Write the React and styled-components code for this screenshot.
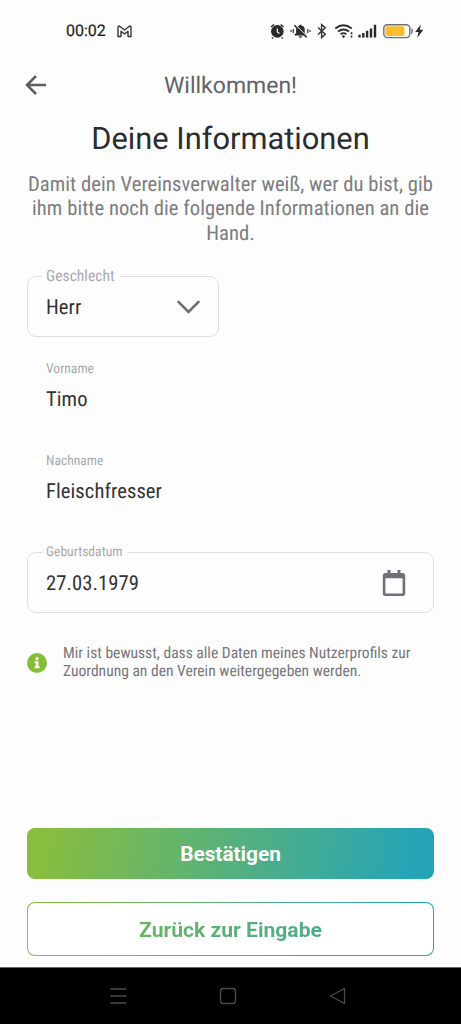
import React from "react";
import styled, { createGlobalStyle } from "styled-components";

const Global = createGlobalStyle`
  * { box-sizing: border-box; }
  body { margin: 0; background: #fdfdfd; font-family: Roboto, "Liberation Sans", sans-serif; text-rendering: geometricPrecision; }
`;

const Screen = styled.div`
  width: 461px;
  height: 1024px;
  display: flex;
  flex-direction: column;
  background: #fdfdfd;
  overflow: hidden;
`;

const StatusBar = styled.header`
  height: 62px;
  padding: 0 36px 0 66px;
  display: flex;
  align-items: center;
  flex: none;
`;

const Clock = styled.span`
  font: 400 16px/20px Roboto, sans-serif;
  color: #1f1f1f;
  -webkit-text-stroke: 0.2px #1f1f1f;
  width: 51px;
  white-space: nowrap;
`;

const StatusIcons = styled.div`
  margin-left: auto;
  width: 156px;
  height: 20px;
`;

const TitleBar = styled.div`
  height: 46px;
  display: grid;
  grid-template-columns: 48px 1fr 48px;
  align-items: center;
  padding: 0 12px;
  flex: none;
`;

const BackButton = styled.button`
  border: 0;
  background: none;
  padding: 0;
  height: 46px;
  display: grid;
  place-items: center;
`;

const BarTitle = styled.div`
  text-align: center;
  font-size: 23px;
  line-height: 30px;
  padding-top: 2px;
  color: #626267;
`;

const Heading = styled.h1`
  margin: 13px 0 0;
  text-align: center;
  font-size: 30.8px;
  line-height: 36px;
  font-weight: 400;
  color: #2c2c2e;
`;

const Condensed = styled.span`
  display: block;
  width: max-content;
  white-space: nowrap;
  font-family: "Roboto Condensed", Roboto, sans-serif;
  font-stretch: 75%;
  font-size: ${(p) => p.$size}px;
  line-height: ${(p) => p.$line}px;
  letter-spacing: ${(p) => p.$track || 0}px;
  color: ${(p) => p.$color};
`;

const Intro = styled.div`
  margin-top: 16px;
  display: flex;
  flex-direction: column;
  align-items: center;
`;

const Form = styled.div`
  margin: 30px 27px 0;
  display: flex;
  flex-direction: column;
  gap: 31px;
`;

const Field = styled.div`
  position: relative;
  width: ${(p) => p.$width || "100%"};
  height: 61px;
  border: ${(p) => (p.$disabled ? "2px solid #ffffff" : "1px solid #dfdfe2")};
  border-radius: 9px;
  padding: ${(p) => (p.$disabled ? "3px 17px 0" : `3px ${p.$right || 18}px 0 18px`)};
  display: flex;
  align-items: center;
  justify-content: space-between;
`;

const FieldLabel = styled.div`
  position: absolute;
  left: ${(p) => (p.$disabled ? 13 : 14)}px;
  top: -10px;
  padding: 0 5px 0 4px;
  background: #fdfdfd;
`;

const Notice = styled.div`
  margin: 31px 27px 0;
  display: flex;
  align-items: center;
  gap: 16px;
`;

const NoticeText = styled.div`
  padding-bottom: 2px;
`;

const Actions = styled.div`
  margin: auto 27px 11px;
  display: flex;
  flex-direction: column;
  gap: 23px;
`;

const Button = styled.button`
  border: 0;
  padding: 0;
  border-radius: 8px;
  font: 700 ${(p) => p.$size}px/24px Roboto, sans-serif;
  display: grid;
  place-items: center;
`;

const PrimaryButton = styled(Button)`
  height: 51px;
  color: #fff;
  background: linear-gradient(100deg, #88bd40 5%, #58b17a 48%, #25a4b8 95%);
`;

const OutlineButton = styled(Button)`
  height: 54px;
  padding-top: 1px;
  border: 1.5px solid transparent;
  background: linear-gradient(#fff, #fff) padding-box,
    linear-gradient(100deg, #88bd40 5%, #58b17a 48%, #25a4b8 95%) border-box;
`;

const GradientText = styled.span`
  background: linear-gradient(90deg, #69b565, #4bac8b);
  background-clip: text;
  -webkit-background-clip: text;
  color: transparent;
`;

const NavBar = styled.nav`
  height: 57px;
  flex: none;
  background: #000;
  border-top: 1px solid #666;
  padding: 0 110px 0 105px;
  display: flex;
  align-items: center;
  justify-content: space-between;
`;

function MailIcon() {
  return (
    <svg width="15" height="13" viewBox="0 0 16 14" fill="none" stroke="#333" strokeWidth="1.5" strokeLinejoin="round">
      <path d="M1 12.400V2.200Q1 1 2.400 1L8 5.400 13.600 1Q15 1 15 2.200v10.200h-3.200V6.700L8 9.700 4.200 6.700v5.700z" />
    </svg>
  );
}

function SystemIcons() {
  return (
    <svg width="156" height="20" viewBox="269 21 156 20" fill="none">
      <g>
        <circle cx="277.300" cy="31.400" r="6.300" fill="#292929" />
        <path d="M271 27l3-2.500M283.600 27l-3-2.500M273 37.500l-1 1M281.600 37.500l1 1" stroke="#292929" strokeWidth="1.600" />
        <path d="M277.300 28.500v3.500l2.200 1.500" stroke="#fdfdfd" strokeWidth="1.200" />
      </g>
      <g>
        <path d="M294.500 35.500v-1l1.600-1.600V29q.5-3 3.200-3.600Q300.300 23.500 301.500 25.400q3 .6 3.200 3.600v3.900l1.600 1.600v1zM298.600 36.300h3.600q-.4 1.500-1.800 1.500t-1.800-1.500z" fill="#2d2d2d" />
        <path d="M295.300 24.800l12 12" stroke="#fdfdfd" strokeWidth="1.200" />
        <path d="M294.300 25.200l12.300 12.200" stroke="#2d2d2d" strokeWidth="1.500" />
        <path d="M293.300 29v4M291 30v2M307.800 29v4M310 30v2" stroke="#333" strokeWidth="1.200" />
      </g>
      <path d="M318 27.500l7.300 6.800-3.700 3.300V24.600l3.700 3.200-7.300 6.800" stroke="#333" strokeWidth="1.400" />
      <g stroke="#2d2d2d" strokeWidth="1.900">
        <path d="M335.300 28.500q8.200-6.300 16.400 0M338 31.500q5.500-4.200 11 0M340.600 34.200q2.900-2.200 5.800 0" />
        <circle cx="343.500" cy="36.500" r=".9" fill="#2d2d2d" strokeWidth="1" />
        <path d="M351.500 32.300v2M351.500 35.600v2" strokeWidth="1.700" />
      </g>
      <path d="M359.500 37.400v-2.600M363.300 37.400v-4.500M367.100 37.400v-6.600M371 37.400v-9M375 37.400V24.800" stroke="#292929" strokeWidth="2.400" />
      <rect x="383.800" y="24.800" width="26" height="12.800" rx="3.500" stroke="#6c7078" strokeWidth="1.400" />
      <rect x="385.300" y="26.300" width="19.200" height="9.800" rx="2" fill="#fbbd2e" />
      <path d="M411.600 28.800q1.300 2.400 0 4.800" stroke="#6c7078" strokeWidth="1.400" />
      <path d="M420.800 24.500l-5.600 7.600h3.300l-1.300 5.700 6.200-8h-3.500z" fill="#292929" />
    </svg>
  );
}

function BackIcon() {
  return (
    <svg width="22" height="22" viewBox="0 0 22 22" fill="none" stroke="#5c5c61" strokeWidth="2.500">
      <path d="M21 11H2.500M11 2L2 11l9 9" />
    </svg>
  );
}

function ChevronIcon() {
  return (
    <svg width="24" height="16" viewBox="0 0 24 16" fill="none" stroke="#6d6e72" strokeWidth="2.600" strokeLinecap="round">
      <path d="M2.500 1.800l10 10 10-10" />
    </svg>
  );
}

function CalendarIcon() {
  return (
    <svg width="24" height="28" viewBox="0 0 24 28">
      <path fill="#6f7177" fillRule="evenodd" d="M5.500 0h3v3h7V0h3v3H20.700q2.500 0 2.500 2.500v18Q23.200 26 20.700 26H3.300Q.8 26 .8 23.500v-18Q.8 3 3.300 3h2.200zM3.400 8.300v15.300H20.600V8.300z" />
    </svg>
  );
}

function InfoIcon() {
  return (
    <svg width="20" height="20" viewBox="0 0 20 20">
      <circle cx="10" cy="10" r="10" fill="#84bd37" />
      <circle cx="10" cy="5.700" r="1.600" fill="#fff" />
      <path d="M7.600 8.300h3.800v5h1.200v1.900H7.600v-1.900h1.200v-3.100H7.600z" fill="#fff" />
    </svg>
  );
}

function TextField({ label, value, labelSize = 13.6, children, ...box }) {
  return (
    <Field {...box}>
      <FieldLabel $disabled={box.$disabled}>
        <Condensed $size={labelSize} $line={18} $color="#a9a9b0">{label}</Condensed>
      </FieldLabel>
      <Condensed $size={20.6} $line={24} $track={0.08} $color="#333335">{value}</Condensed>
      {children}
    </Field>
  );
}

function IntroLine({ children }) {
  return <Condensed $size={20.6} $line={24.3} $track={0.05} $color="#7c7c81">{children}</Condensed>;
}

function NoticeLine({ children }) {
  return <Condensed $size={15.55} $line={18} $color="#76767b">{children}</Condensed>;
}

export default function App() {
  return (
    <Screen>
      <Global />
      <StatusBar>
        <Clock>00:02</Clock>
        <MailIcon />
        <StatusIcons><SystemIcons /></StatusIcons>
      </StatusBar>
      <TitleBar>
        <BackButton aria-label="Zurück"><BackIcon /></BackButton>
        <BarTitle>Willkommen!</BarTitle>
      </TitleBar>
      <Heading>Deine Informationen</Heading>
      <Intro>
        <IntroLine>Damit dein Vereinsverwalter weiß, wer du bist, gib</IntroLine>
        <IntroLine>ihm bitte noch die folgende Informationen an die</IntroLine>
        <IntroLine>Hand.</IntroLine>
      </Intro>
      <Form>
        <TextField label="Geschlecht" value="Herr" labelSize={15.6} $width="192px"><ChevronIcon /></TextField>
        <TextField label="Vorname" value="Timo" $disabled />
        <TextField label="Nachname" value="Fleischfresser" $disabled />
        <TextField label="Geburtsdatum" value="27.03.1979" $right={27}><CalendarIcon /></TextField>
      </Form>
      <Notice>
        <InfoIcon />
        <NoticeText>
          <NoticeLine>Mir ist bewusst, dass alle Daten meines Nutzerprofils zur</NoticeLine>
          <NoticeLine>Zuordnung an den Verein weitergegeben werden.</NoticeLine>
        </NoticeText>
      </Notice>
      <Actions>
        <PrimaryButton $size={20.8}>Bestätigen</PrimaryButton>
        <OutlineButton $size={21.1}><GradientText>Zurück zur Eingabe</GradientText></OutlineButton>
      </Actions>
      <NavBar>
        <svg width="26" height="24" viewBox="0 0 26 24" stroke="#4b4b4b" strokeWidth="1.300"><path d="M5.500 5h16M5.500 12h16M5.500 19h16" /></svg>
        <svg width="26" height="24" viewBox="0 0 26 24" fill="none" stroke="#4b4b4b" strokeWidth="1.300"><rect x="5.500" y="4.500" width="15" height="15" rx="3" /></svg>
        <svg width="26" height="24" viewBox="0 0 26 24" fill="none" stroke="#4b4b4b" strokeWidth="1.300" strokeLinejoin="round"><path d="M19.500 4.500v15L5.500 12z" /></svg>
      </NavBar>
    </Screen>
  );
}
